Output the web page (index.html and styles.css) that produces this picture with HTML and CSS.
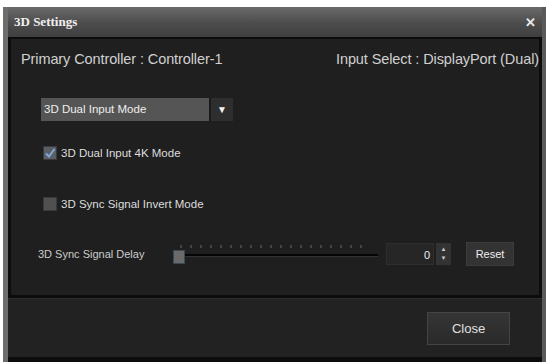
FILE: index.html
```html
<!DOCTYPE html>
<html lang="en">
<head>
  <meta charset="UTF-8">
  <title>3D Settings</title>
  <link rel="stylesheet" href="styles.css">
</head>
<body>
  <div class="dialog">
    <div class="titlebar">
      <span class="title">3D Settings</span>
      <span class="close-x">&#x2715;</span>
    </div>
    <div class="panel">
      <div class="info-row">
        <span>Primary Controller : Controller-1</span>
        <span>Input Select : DisplayPort (Dual)</span>
      </div>

      <div class="select">
        <span class="select-text">3D Dual Input Mode</span>
        <span class="select-arrow">&#9660;</span>
      </div>

      <label class="check-row">
        <span class="check checked">
          <svg width="12" height="12" viewBox="0 0 12 12"><path d="M2 6.5 L5 9.5 L10.5 2" fill="none" stroke="#7fa8d8" stroke-width="2"/></svg>
        </span>
        3D Dual Input 4K Mode
      </label>

      <label class="check-row second">
        <span class="check"></span>
        3D Sync Signal Invert Mode
      </label>

      <div class="delay-row">
        <span class="delay-label">3D Sync Signal Delay</span>
        <div class="slider">
          <div class="ticks"></div>
          <div class="track"></div>
          <div class="thumb"></div>
        </div>
        <div class="spin">
          <span class="spin-value">0</span>
          <span class="spin-btns">
            <span class="up">&#9650;</span>
            <span class="down">&#9660;</span>
          </span>
        </div>
        <button class="reset">Reset</button>
      </div>
    </div>
    <div class="footer">
      <button class="close">Close</button>
    </div>
  </div>
</body>
</html>
```

FILE: styles.css
```css
body {
  margin: 0;
  background: #fff;
  font-family: "Liberation Sans", Arial, sans-serif;
  padding: 7px 2px 0 3px;
}
.dialog {
  height: 355px;
  box-sizing: border-box;
  background: #232323;
  border-left: 5px solid #6e6e6e;
  border-right: 4px solid #5a5a5a;
  display: flex;
  flex-direction: column;
  position: relative;
}
.titlebar {
  height: 30px;
  background: linear-gradient(#6a6a6a, #4c4c4c 55%, #3f3f3f);
  display: flex;
  align-items: center;
  justify-content: space-between;
  padding: 0 6px 0 6px;
}
.title {
  font-family: "Liberation Serif", serif;
  font-weight: bold;
  font-size: 13px;
  color: #f0f0f0;
}
.close-x {
  color: #e8e8e8;
  font-size: 13px;
  font-weight: bold;
}
.panel {
  border: 3px solid #0c0c0c;
  border-top-width: 2px;
  background: #1f1f1f;
  height: 261px;
  box-sizing: border-box;
  padding: 12px 0 0 10px;
}
.info-row {
  display: flex;
  justify-content: space-between;
  font-size: 14.5px;
  color: #d0d0d0;
  letter-spacing: -0.1px;
}
.select {
  margin: 31px 0 0 20px;
  width: 192px;
  height: 23px;
  display: flex;
  background: #555;
  font-size: 11.5px;
  color: #eee;
}
.select-text {
  flex: 1;
  line-height: 23px;
  padding-left: 3px;
}
.select-arrow {
  width: 22px;
  background: #2e2e2e;
  color: #f0f0f0;
  font-size: 10px;
  text-align: center;
  line-height: 23px;
  border-left: 2px solid #1a1a1a;
}
.check-row {
  display: flex;
  align-items: center;
  gap: 4px;
  margin: 25px 0 0 22px;
  font-size: 11.5px;
  color: #ddd;
}
.check-row.second {
  margin-top: 37px;
}
.check {
  width: 12px;
  height: 12px;
  background: #505050;
  border: 1px solid #3a3a3a;
  display: flex;
}
.check.checked {
  background: #5a5f66;
}
.delay-row {
  display: flex;
  align-items: center;
  margin: 31px 0 0 17px;
  font-size: 11px;
  color: #ccc;
}
.delay-label {
  width: 134px;
}
.slider {
  position: relative;
  width: 206px;
  height: 24px;
}
.ticks {
  position: absolute;
  left: 8px;
  right: 10px;
  top: 3px;
  height: 3px;
  background: repeating-linear-gradient(90deg, #444 0 2px, transparent 2px 10px);
}
.track {
  position: absolute;
  left: 6px;
  right: 0;
  top: 12px;
  height: 2px;
  background: #050505;
  border-bottom: 1px solid #333;
}
.thumb {
  position: absolute;
  left: 1px;
  top: 8px;
  width: 10px;
  height: 12px;
  background: #6a6a6a;
  border: 1px solid #3a4a55;
}
.spin {
  display: flex;
  margin-left: 8px;
  height: 22px;
}
.spin-value {
  width: 43px;
  background: #262626;
  border: 1px solid #2e2e2e;
  text-align: right;
  padding-right: 3px;
  line-height: 22px;
  color: #eee;
  font-size: 11px;
}
.spin-btns {
  width: 15px;
  margin-left: 2px;
  background: #333;
  display: flex;
  flex-direction: column;
  justify-content: center;
  align-items: center;
  font-size: 6px;
  color: #ccc;
  line-height: 9px;
}
button {
  font-family: "Liberation Sans", Arial, sans-serif;
  cursor: pointer;
}
.reset {
  margin-left: 15px;
  width: 48px;
  height: 24px;
  background: #333;
  border: 1px solid #3c3c3c;
  color: #eee;
  font-size: 11px;
  padding: 0;
}
.footer {
  flex: 1;
  background: #222;
  border-top: 1px solid #2d2d2d;
  display: flex;
  justify-content: flex-end;
  align-items: flex-start;
  padding: 13px 32px 0 0;
  border-bottom: 5px solid #0c0c0c;
}
.close {
  width: 83px;
  height: 33px;
  background: linear-gradient(#353535, #2a2a2a);
  border: 1px solid #444;
  color: #e0e0e0;
  font-size: 13px;
}
```
